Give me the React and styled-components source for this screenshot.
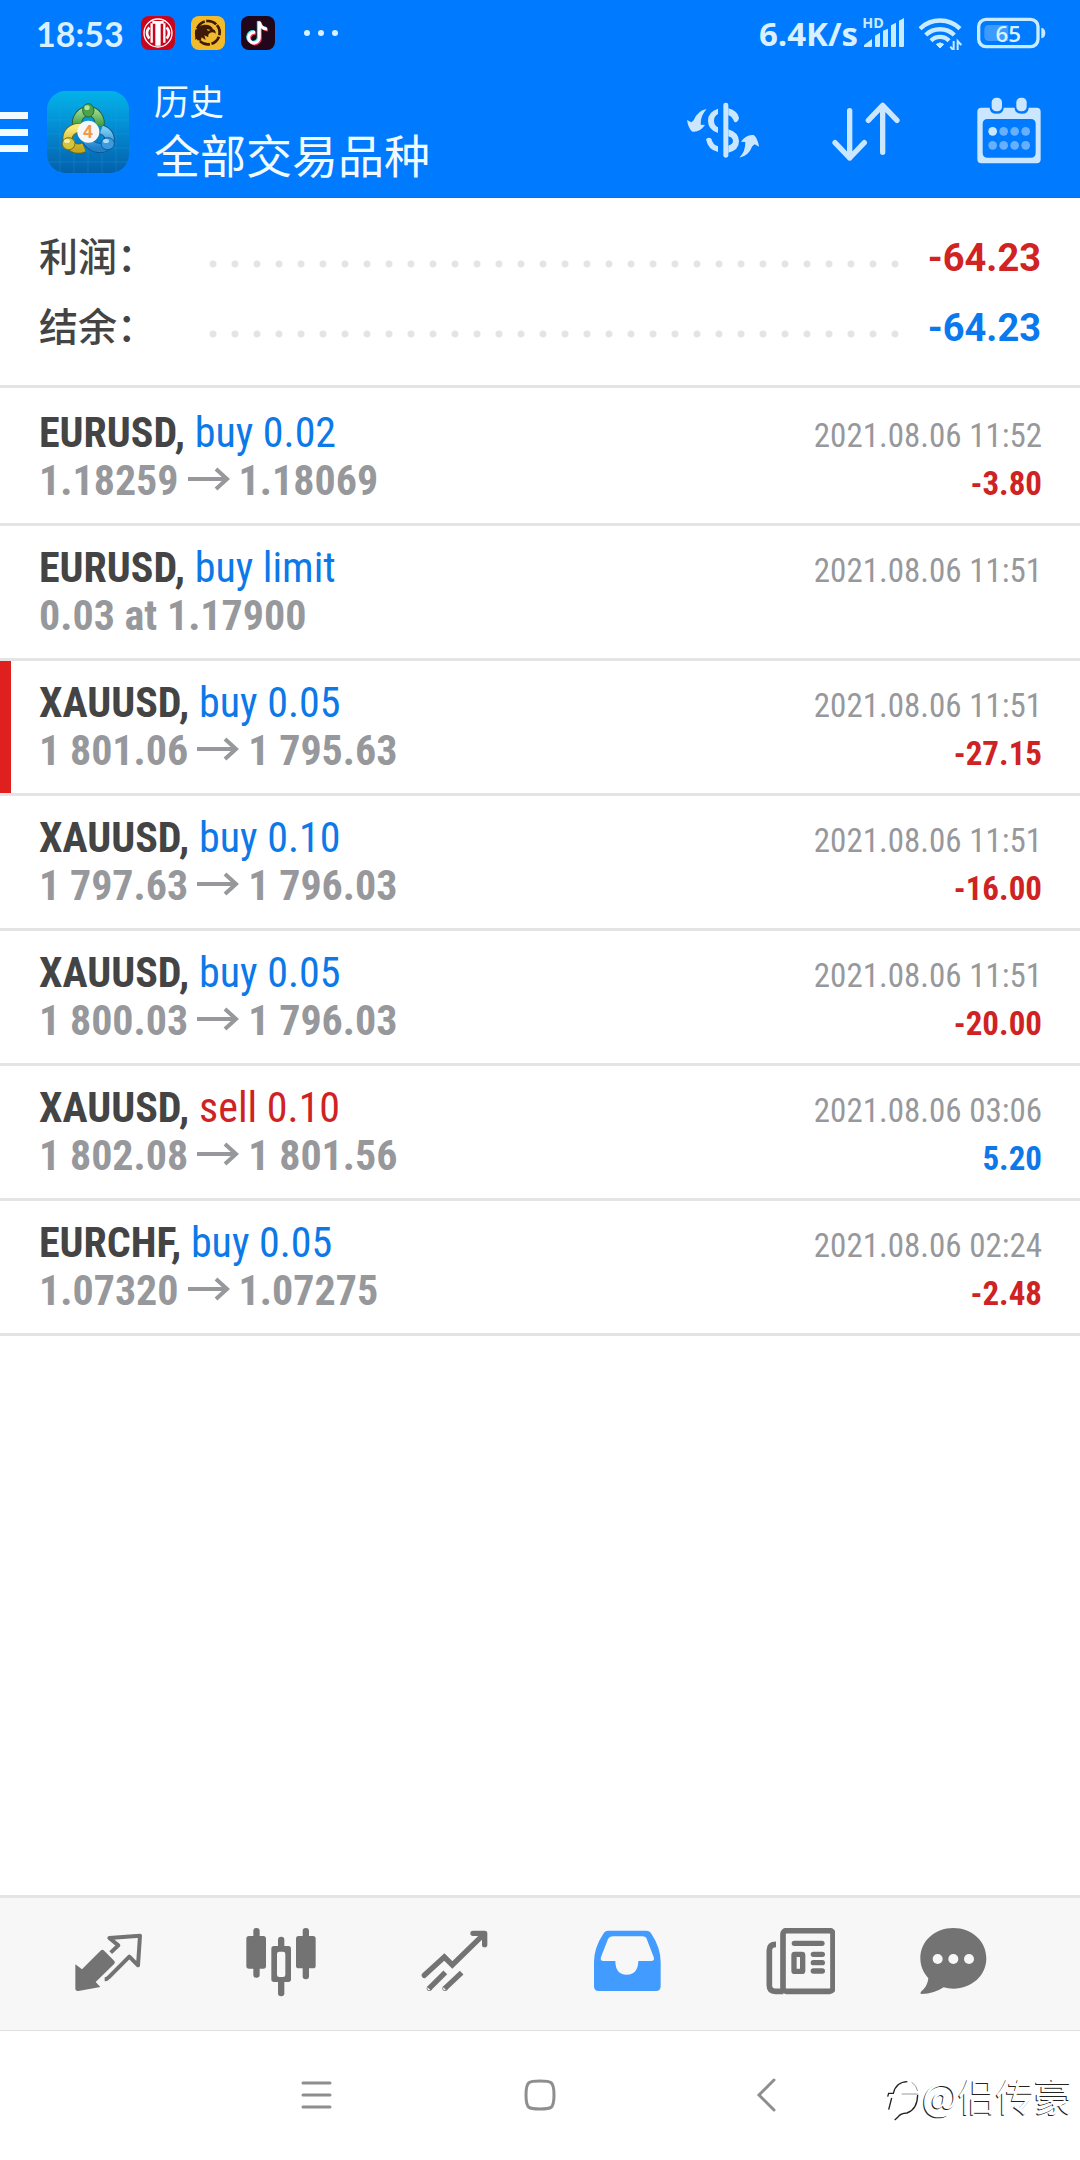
import React from 'react';
import styled, { createGlobalStyle } from 'styled-components';

const GlobalStyle = createGlobalStyle`
  * {
    margin: 0;
    padding: 0;
    box-sizing: border-box;
  }

  html, body, #root {
    min-height: 100%;
    width: 100%;
    background-color: #ffffff;
    font-family: Roboto, "Noto Sans CJK SC", sans-serif;
  }

  button {
    border: none;
    background: none;
    color: inherit;
    font: inherit;
    cursor: pointer;
  }

  svg {
    display: block;
    flex: none;
  }
`;

const deals = [
  { id: 1, symbol: 'EURUSD', side: 'buy', label: 'buy 0.02', from: '1.18259', to: '1.18069', time: '2021.08.06 11:52', profit: '-3.80' },
  { id: 2, symbol: 'EURUSD', side: 'buy', label: 'buy limit', note: '0.03 at 1.17900', time: '2021.08.06 11:51' },
  { id: 3, symbol: 'XAUUSD', side: 'buy', label: 'buy 0.05', from: '1 801.06', to: '1 795.63', time: '2021.08.06 11:51', profit: '-27.15', marked: true },
  { id: 4, symbol: 'XAUUSD', side: 'buy', label: 'buy 0.10', from: '1 797.63', to: '1 796.03', time: '2021.08.06 11:51', profit: '-16.00' },
  { id: 5, symbol: 'XAUUSD', side: 'buy', label: 'buy 0.05', from: '1 800.03', to: '1 796.03', time: '2021.08.06 11:51', profit: '-20.00' },
  { id: 6, symbol: 'XAUUSD', side: 'sell', label: 'sell 0.10', from: '1 802.08', to: '1 801.56', time: '2021.08.06 03:06', profit: '5.20' },
  { id: 7, symbol: 'EURCHF', side: 'buy', label: 'buy 0.05', from: '1.07320', to: '1.07275', time: '2021.08.06 02:24', profit: '-2.48' },
];

// Status bar icons
const BankIcon = () => (
  <svg width="34" height="34" viewBox="423 48 102 102">
    <rect x="423" y="48" width="102" height="102" rx="24" fill="#c9051d" />
    <circle cx="474" cy="99" r="42" fill="#c9051d" stroke="#fff" strokeWidth="4" />
    <path d="M457 63h34v8h-9v66h-16V71h-9z" fill="#fff" />
    <path d="M455 70v58M493 70v58" stroke="#fff" strokeWidth="7" />
    <path d="M448 82q-14 17 0 34M500 82q14 17 0 34" stroke="#fff" strokeWidth="8" fill="none" />
    <path d="M461 75v57M487 75v57" stroke="#c9051d" strokeWidth="3" />
  </svg>
);

const EagleIcon = () => (
  <svg width="34" height="34" viewBox="573 48 102 102">
    <rect x="573" y="48" width="102" height="102" rx="24" fill="#f2bb2b" />
    <circle cx="624" cy="98" r="35" fill="none" stroke="#3f1a08" strokeWidth="8" strokeDasharray="32 4.6" transform="rotate(-40 624 98)" />
    <path d="M585 95q8-18 28-21 22-1 26 14 8 1 8 13-8-7-16-3-8 4-6 14l-12-6 4 14-12-8-4 14-8-12-7 6z" fill="#3f1a08" />
    <path d="M620 87l12 3-8 3z" fill="#f2bb2b" />
  </svg>
);

const MusicIcon = () => (
  <svg width="34" height="34" viewBox="723 48 102 102">
    <rect x="723" y="48" width="102" height="102" rx="24" fill="#22061a" />
    <g fill="none" strokeWidth="9">
      <path d="M765 97a16 16 0 1 0 13 16V65q3 20 23 22" stroke="#37e5e4" transform="translate(-3 -2)" />
      <path d="M765 97a16 16 0 1 0 13 16V65q3 20 23 22" stroke="#f5375c" transform="translate(3 3)" />
      <path d="M765 97a16 16 0 1 0 13 16V65q3 20 23 22" stroke="#fff" />
    </g>
  </svg>
);

const MoreIcon = () => (
  <svg width="36" height="8" viewBox="0 0 36 8" fill="#d8f0ff">
    <circle cx="4" cy="4" r="3" />
    <circle cx="18" cy="4" r="3" />
    <circle cx="32" cy="4" r="3" />
  </svg>
);

const SignalIcon = () => (
  <svg width="43" height="50" viewBox="663 24 129 150" fill="#c8ebff">
    <text x="664" y="83" fontSize="43" fontWeight="700" fontFamily="Open Sans, sans-serif">HD</text>
    <path d="M669 141v-6l24-18v21q0 3-3 3zM702 107l15-9v40q0 3-3 3h-9q-3 0-3-3zM726 92l15-6v52q0 3-3 3h-9q-3 0-3-3zM750 76l15-8v70q0 3-3 3h-9q-3 0-3-3zM774 62l15-8v84q0 3-3 3h-9q-3 0-3-3z" />
  </svg>
);

const WifiIcon = () => (
  <svg width="43" height="34" viewBox="837 48 129 102">
    <g fill="none" stroke="#c8ebff" strokeWidth="13">
      <path d="M840 86a86 86 0 0 1 120 0" />
      <path d="M857 105a62 62 0 0 1 86 0" />
      <path d="M873 122a38 38 0 0 1 54 0" />
    </g>
    <path d="M889 133q11-9 22 0l-11 11z" fill="#c8ebff" stroke="#c8ebff" strokeWidth="3" />
    <path d="M941 123v29l-10-12M953 152v-29l11 12" fill="none" stroke="#c8ebff" strokeWidth="6" />
  </svg>
);

const BatteryIcon = () => (
  <svg width="69" height="34" viewBox="1010 48 207 102">
    <rect x="1015" y="58" width="178" height="82" rx="22" fill="none" stroke="#c8ebff" strokeWidth="10" />
    <path d="M1046 75h58v48h-58q-14 0-14-14V89q0-14 14-14z" fill="#3d9bff" />
    <path d="M1203 83q12 2 12 16t-12 16z" fill="#c8ebff" />
    <text x="1104" y="125" fontSize="67" fontWeight="600" textAnchor="middle" fill="#d8f2ff" fontFamily="Open Sans, sans-serif">65</text>
  </svg>
);

// Header icons
const BarsIcon = () => (
  <svg width="28" height="42" viewBox="0 0 28 42" fill="#f0faff">
    <path d="M0 1h28v7H0zM0 18h28v7H0zM0 34h28v7H0z" />
  </svg>
);

const AppLogo = () => (
  <svg width="82" height="82" viewBox="141 273 246 246">
    <defs>
      <linearGradient id="tile" x1="0" y1="0" x2="0" y2="1">
        <stop offset="0" stopColor="#02b3ea" />
        <stop offset="0.5" stopColor="#0388cf" />
        <stop offset="1" stopColor="#0360ab" />
      </linearGradient>
      <linearGradient id="green" x1="0" y1="0" x2="0" y2="1">
        <stop offset="0" stopColor="#9ad58a" />
        <stop offset="1" stopColor="#3c9a3f" />
      </linearGradient>
      <linearGradient id="gold" x1="0" y1="0" x2="0" y2="1">
        <stop offset="0" stopColor="#f6e977" />
        <stop offset="1" stopColor="#c4aa1e" />
      </linearGradient>
      <linearGradient id="sky" x1="0" y1="0" x2="0" y2="1">
        <stop offset="0" stopColor="#7accf4" />
        <stop offset="1" stopColor="#1f7fcb" />
      </linearGradient>
    </defs>
    <rect x="141" y="273" width="246" height="246" rx="56" fill="url(#tile)" />
    <path d="M180 273v246M222 273v246M264 273v246M306 273v246M348 273v246M141 318h246M141 360h246M141 402h246M141 444h246M141 486h246" stroke="#2aa5de" strokeWidth="2" opacity="0.4" />
    <g fill="none" strokeWidth="30">
      <path d="M232 378a34 36 0 1 1 66 0" stroke="#205b32" />
      <path d="M232 378a34 36 0 1 1 66 0" stroke="url(#green)" strokeWidth="25" />
      <path d="M244 384c-30-2-44 18-41 36 3 20 26 32 49 22" stroke="#6e651a" />
      <path d="M244 384c-30-2-44 18-41 36 3 20 26 32 49 22" stroke="url(#gold)" strokeWidth="25" />
      <path d="M304 388c22 8 30 26 22 42-10 20-48 20-66-10" stroke="#124d82" />
      <path d="M304 388c22 8 30 26 22 42-10 20-48 20-66-10" stroke="url(#sky)" strokeWidth="25" />
    </g>
    <ellipse cx="265" cy="331" rx="17" ry="20" fill="#4ba548" stroke="#236b31" strokeWidth="3" />
    <ellipse cx="206" cy="431" rx="19" ry="18" fill="#d8c43a" stroke="#7d7116" strokeWidth="3" />
    <ellipse cx="323" cy="431" rx="20" ry="18" fill="#3d9ade" stroke="#155a97" strokeWidth="3" />
    <ellipse cx="261" cy="323" rx="8" ry="7" fill="#b5e3a6" />
    <ellipse cx="201" cy="423" rx="9" ry="6" fill="#f8f0a4" />
    <ellipse cx="318" cy="423" rx="9" ry="6" fill="#a9defa" />
    <circle cx="265" cy="395" r="33" fill="#f6f6f6" />
    <text x="264" y="414" fontSize="54" fontWeight="700" textAnchor="middle" fill="#f39a4a" fontFamily="Roboto, sans-serif">4</text>
  </svg>
);

const curvedArrow = 'M197 327Q170 331 158 361L151 367 138 360Q142 386 154 395 176 398 192 375L179 374Q178 346 197 327z';

const CurrencyIcon = () => (
  <svg width="72" height="72" viewBox="138 288 216 216" fill="#cbe6ff">
    <path d={curvedArrow} />
    <path d={curvedArrow} transform="rotate(180 246 400)" />
    <rect x="247" y="308" width="15" height="165" rx="7" />
    <path d="M231 326v16q-12 6-12 20t12 20v17q-30-10-30-37t30-36z" />
    <path d="M195 418q6-8 16-2 4 18 20 23v17q-30-6-36-38z" />
    <path d="M262 325q28 8 32 28-3 16-14 13-6-17-18-20z" />
    <path fillRule="evenodd" d="M262 388q32 10 32 36 0 27-32 34zM262 409v28q14-4 14-14t-14-14z" />
  </svg>
);

const SortIcon = () => (
  <svg width="72" height="72" viewBox="567 288 216 216" fill="none" stroke="#cbe6ff" strokeWidth="16" strokeLinecap="round" strokeLinejoin="round">
    <path d="M626 332v142M582 428l44 46 44-46M725 457V316M682 361l43-45 43 45" />
  </svg>
);

const CalendarIcon = () => (
  <svg width="72" height="72" viewBox="997 288 216 216">
    <path fillRule="evenodd" fill="#cbe6ff" d="M1022 323h25q0 18 21 18t21-18h33q0 18 21 18t21-18h24q12 0 12 12v143q0 12-12 12h-166q-12 0-12-12V335q0-12 12-12zM1041 357q-15 0-15 15v86q0 15 15 15h129q15 0 15-15v-86q0-15-15-15z" />
    <rect x="1053" y="293" width="31" height="41" rx="14" fill="#cbe6ff" />
    <rect x="1127" y="293" width="31" height="41" rx="14" fill="#cbe6ff" />
    <g fill="#66b0ff">
      <circle cx="1056" cy="394" r="13" fill="#cbe6ff" />
      <circle cx="1089" cy="394" r="13" />
      <circle cx="1122" cy="394" r="13" />
      <circle cx="1155" cy="394" r="13" />
      <circle cx="1056" cy="436" r="13" />
      <circle cx="1089" cy="436" r="13" />
      <circle cx="1122" cy="436" r="13" />
      <circle cx="1155" cy="436" r="13" />
    </g>
  </svg>
);

const ArrowIcon = () => (
  <svg width="42" height="28" viewBox="0 0 42 28" fill="none" stroke="currentColor" strokeWidth="4">
    <path d="M0 12h39M28 2l11 10-11 10" />
  </svg>
);

// Tab bar icons
const QuotesIcon = () => (
  <svg width="72" height="72" viewBox="217 144 216 216">
    <path d="M227 253l20 15 57-57q4-3 8 0l32 32q3 4 0 8l-56 55 14 15-66 12q-9 1-9-8z" fill="#737373" />
    <path d="M333 218l23-22-27-22 92-7-6 89-26-26-62 62q-5 6-12 6" fill="none" stroke="#737373" strokeWidth="12" strokeLinejoin="round" />
  </svg>
);

const ChartIcon = () => (
  <svg width="72" height="72" viewBox="735 144 216 216" fill="#737373">
    <rect x="760" y="144" width="19" height="149" rx="9" />
    <rect x="739" y="168" width="59" height="98" rx="8" />
    <rect x="834" y="170" width="19" height="179" rx="9" />
    <rect x="814" y="198" width="59" height="108" rx="8" />
    <rect x="831" y="215" width="25" height="76" rx="7" fill="#f7f7f7" />
    <rect x="908" y="144" width="19" height="154" rx="9" />
    <rect x="888" y="168" width="59" height="97" rx="8" />
  </svg>
);

const TradeIcon = () => (
  <svg width="72" height="72" viewBox="173 144 216 216" fill="none" stroke="#737373" strokeWidth="16">
    <path d="M192 286l60-55 24 24 94-92" strokeLinecap="round" />
    <path d="M338 160h35v34" strokeLinecap="round" strokeLinejoin="round" />
    <path d="M255 277l-49 49M304 278l-51 48" />
    <circle cx="207" cy="325" r="1" strokeWidth="14" />
    <circle cx="254" cy="325" r="1" strokeWidth="14" />
  </svg>
);

const HistoryIcon = () => (
  <svg width="72" height="72" viewBox="691 144 216 216">
    <path fillRule="evenodd" fill="#429bff" d="M746 152h114q10 0 15 9 28 42 28 85v73q0 14-14 14H717q-14 0-14-14v-73q0-43 28-85 5-9 15-9zM759 169q-10 0-14 8l-21 54q-4 12 8 12h35q0 41 34 41t35-41h38q12 0 8-12l-20-52q-3-10-14-10z" />
  </svg>
);

const NewsIcon = () => (
  <svg width="72" height="72" viewBox="129 144 216 216" fill="none" stroke="#737373">
    <rect x="189" y="152" width="150" height="182" rx="10" strokeWidth="17" />
    <path d="M168 193q-20 0-20 18v105q0 18 18 18h24" strokeWidth="17" />
    <path d="M223 190h83M280 223h27M280 248h27M280 273h27" strokeWidth="16" strokeLinecap="round" />
    <rect x="222" y="223" width="26" height="51" rx="2" strokeWidth="16" />
  </svg>
);

const ChatIcon = () => (
  <svg width="106" height="72" viewBox="596 144 318 216">
    <path d="M699 144c55 0 99 39 99 91s-44 91-99 91q-16 0-29-4-28 19-66 20-6-1-2-7 20-16 22-40c-15-17-24-37-24-60 0-52 44-91 99-91z" fill="#737373" />
    <g fill="#f7f7f7">
      <circle cx="652" cy="237" r="15" />
      <circle cx="699" cy="237" r="15" />
      <circle cx="746" cy="237" r="15" />
    </g>
  </svg>
);

// System navigation icons
const RecentIcon = () => (
  <svg width="36" height="36" viewBox="0 0 36 36" stroke="#8e8e8e" strokeWidth="3" strokeLinecap="round">
    <path d="M7 5h27M7 17h27M7 29h27" />
  </svg>
);

const HomeIcon = () => (
  <svg width="36" height="36" viewBox="0 0 36 36" fill="none" stroke="#8e8e8e" strokeWidth="3">
    <path d="M18 3c11 0 14 0 14 14s-3 14-14 14S4 31 4 17 7 3 18 3z" />
  </svg>
);

const BackIcon = () => (
  <svg width="36" height="36" viewBox="0 0 36 36" fill="none" stroke="#8e8e8e" strokeWidth="3" strokeLinecap="round">
    <path d="M26 2L11 17l15 15" />
  </svg>
);

const WatermarkLogo = () => (
  <svg width="34" height="42" viewBox="48 68 102 126" fill="none" stroke="#222" strokeWidth="4">
    <path d="M50 118l3-10h14q8-34 42-35M62 122l-9 35M140 112q-1 44-32 55-20 1-27 12l-10 9" />
    <path d="M122 75q14 8 18 26M92 110h48" stroke="#999" strokeWidth="3" />
  </svg>
);

const tabs = [
  { name: 'Quotes', Icon: QuotesIcon },
  { name: 'Charts', Icon: ChartIcon },
  { name: 'Trade', Icon: TradeIcon },
  { name: 'History', Icon: HistoryIcon },
  { name: 'News', Icon: NewsIcon },
  { name: 'Messages', Icon: ChatIcon },
];

const App = () => {
  return (
    <>
      <GlobalStyle />
      <Screen>
        <Header>
          <StatusBar>
            <Clock>18:53</Clock>
            <NoticeIcons>
              <BankIcon />
              <EagleIcon />
              <MusicIcon />
            </NoticeIcons>
            <MoreIcon />
            <StatusRight>
              <Speed>6.4K/s</Speed>
              <SignalIcon />
            </StatusRight>
            <WifiIcon />
            <BatteryIcon />
          </StatusBar>
          <AppBar>
            <MenuButton aria-label="Menu"><BarsIcon /></MenuButton>
            <AppLogo />
            <Heading>
              <Subtitle>历史</Subtitle>
              <Title>全部交易品种</Title>
            </Heading>
            <ActionButton aria-label="Symbols"><CurrencyIcon /></ActionButton>
            <ActionButton aria-label="Sort"><SortIcon /></ActionButton>
            <ActionButton aria-label="Period"><CalendarIcon /></ActionButton>
          </AppBar>
        </Header>

        <Main>
          <Summary>
            <SummaryRow>
              <SummaryLabel>利润：</SummaryLabel>
              <Dots />
              <SummaryValue $color="#d12323">-64.23</SummaryValue>
            </SummaryRow>
            <SummaryRow>
              <SummaryLabel>结余：</SummaryLabel>
              <Dots />
              <SummaryValue $color="#0a79ee">-64.23</SummaryValue>
            </SummaryRow>
          </Summary>

          <DealList>
            {deals.map(deal => (
              <Deal key={deal.id} $marked={deal.marked}>
                <DealLine>
                  <Symbol>
                    {deal.symbol}, <Side $side={deal.side}>{deal.label}</Side>
                  </Symbol>
                  <Time>{deal.time}</Time>
                </DealLine>
                <DealLine>
                  {deal.note ? (
                    <Price>{deal.note}</Price>
                  ) : (
                    <Price>
                      {deal.from}
                      <ArrowIcon />
                      {deal.to}
                    </Price>
                  )}
                  {deal.profit && (
                    <Profit $loss={deal.profit.startsWith('-')}>{deal.profit}</Profit>
                  )}
                </DealLine>
              </Deal>
            ))}
          </DealList>
        </Main>

        <TabBar>
          {tabs.map(({ name, Icon }) => (
            <TabButton key={name} aria-label={name}><Icon /></TabButton>
          ))}
        </TabBar>

        <SystemBar>
          <SystemButton aria-label="Recent apps"><RecentIcon /></SystemButton>
          <SystemButton aria-label="Home"><HomeIcon /></SystemButton>
          <SystemButton aria-label="Back"><BackIcon /></SystemButton>
          <Watermark>
            <WatermarkLogo />
            @侣传豪
          </Watermark>
        </SystemBar>
      </Screen>
    </>
  );
};

// Full height column, the list takes the free space
const Screen = styled.div`
  display: flex;
  flex-direction: column;
  width: 100%;
  min-height: 100vh;
`;

const Header = styled.header`
  background-color: #007aff;
  border-bottom: 1px solid #1a6fd0;
  color: #f0faff;
`;

// Phone status bar
const StatusBar = styled.div`
  display: flex;
  align-items: center;
  height: 66px;
  padding: 0 34px 0 36px;
`;

const Clock = styled.span`
  font-family: Lato, sans-serif;
  font-size: 34px;
  font-weight: 700;
  color: #d8f0ff;
`;

const NoticeIcons = styled.div`
  display: flex;
  gap: 16px;
  margin: 0 28px 0 17px;
`;

const StatusRight = styled.div`
  display: flex;
  align-items: center;
  gap: 4px;
  margin-left: auto;

  & + svg {
    margin: 0 15px 0 14px;
  }
`;

const Speed = styled.span`
  font-family: "Open Sans", sans-serif;
  font-size: 33px;
  font-weight: 700;
  color: #d8f0ff;
`;

// App bar with title and actions
const AppBar = styled.div`
  display: flex;
  align-items: center;
  height: 131px;
`;

const MenuButton = styled.button`
  margin-right: 19px;
`;

const Heading = styled.div`
  flex: 1;
  min-width: 0;
  margin-left: 25px;
  padding-bottom: 4px;
  font-family: "Noto Sans CJK SC", sans-serif;
`;

const Subtitle = styled.p`
  font-size: 35px;
  line-height: 44px;
  font-weight: 400;
`;

const Title = styled.h1`
  margin-top: 2px;
  font-size: 46px;
  line-height: 58px;
  font-weight: 400;
`;

const ActionButton = styled.button`
  display: flex;
  justify-content: center;
  align-items: center;
  width: 143px;
  height: 100%;
`;

const Main = styled.main`
  flex: 1;
`;

// Totals on top of the list
const Summary = styled.section`
  padding: 23px 39px 24px;
  border-bottom: 3px solid #e4e4e4;
`;

const SummaryRow = styled.div`
  display: flex;
  align-items: center;
  height: 70px;
`;

const SummaryLabel = styled.span`
  width: 163px;
  padding-bottom: 4px;
  font-family: "Noto Sans CJK SC", sans-serif;
  font-size: 39px;
  font-weight: 500;
  color: #444444;
`;

const Dots = styled.span`
  flex: 1;
  height: 8px;
  margin: 16px 20px 0 0;
  background: radial-gradient(circle at center, #e4e4e4 3px, transparent 4px) 0 0 / 22px 8px repeat-x;
`;

const SummaryValue = styled.span`
  padding-top: 4px;
  font-size: 38px;
  font-weight: 700;
  color: ${props => props.$color};
`;

const DealList = styled.ul`
  padding-top: 3px;
  list-style: none;
  font-family: "Roboto Condensed", "Liberation Sans Narrow", Roboto, sans-serif;
`;

// One closed deal or order
const Deal = styled.li`
  padding: 18px 38px 18px 39px;
  border-bottom: 3px solid #e4e4e4;
  box-shadow: ${props => (props.$marked ? 'inset 11px 0 0 #e01f1f' : 'none')};
`;

const DealLine = styled.div`
  display: flex;
  justify-content: space-between;
  align-items: baseline;
  height: 48px;
  line-height: 48px;
`;

const Symbol = styled.span`
  font-size: 42px;
  font-weight: 700;
  color: #444444;
`;

const Side = styled.span`
  font-weight: 400;
  color: ${props => (props.$side === 'sell' ? '#cf2323' : '#0d79e8')};
`;

const Time = styled.time`
  font-size: 33px;
  color: #97989c;
`;

const Price = styled.span`
  display: flex;
  align-items: center;
  gap: 9px;
  font-size: 42px;
  font-weight: 700;
  color: #97989c;
`;

const Profit = styled.span`
  font-size: 33px;
  font-weight: 700;
  color: ${props => (props.$loss ? '#cf2323' : '#0d79e8')};
`;

// Bottom tabs
const TabBar = styled.nav`
  display: flex;
  height: 136px;
  padding: 0 22px;
  background-color: #f7f7f7;
  border-top: 3px solid #e4e4e4;
  border-bottom: 1px solid #e0e0e0;
`;

const TabButton = styled.button`
  display: flex;
  flex: 1;
  justify-content: center;
  align-items: center;
`;

const SystemBar = styled.div`
  position: relative;
  display: flex;
  justify-content: center;
  height: 129px;
`;

const SystemButton = styled.button`
  display: flex;
  justify-content: center;
  align-items: center;
  width: 226px;
`;

const Watermark = styled.div`
  position: absolute;
  right: 8px;
  bottom: 38px;
  display: flex;
  align-items: center;
  gap: 1px;
  font-family: "Noto Sans CJK SC", sans-serif;
  font-size: 38px;
  line-height: 50px;
  font-weight: 400;
  color: #ffffff;
  text-shadow: -1px 1px 0 #222222;

  svg {
    margin-top: 12px;
  }
`;

export default App;
